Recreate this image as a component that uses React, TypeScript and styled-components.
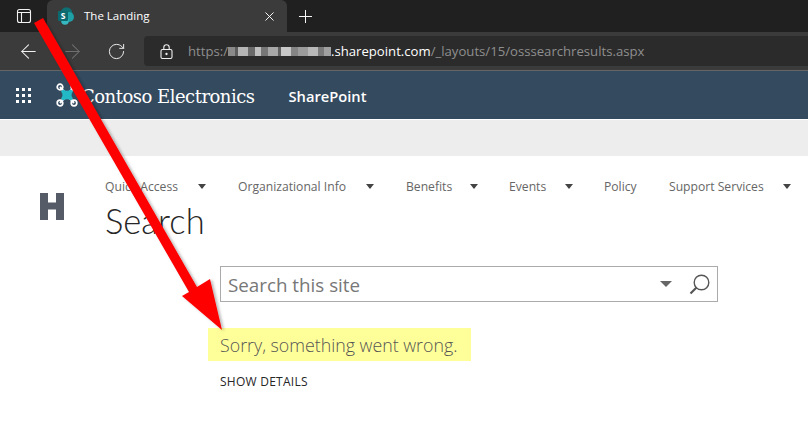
import React from "react";
import styled, { createGlobalStyle } from "styled-components";
import { ArrowLeft, ArrowRight, RotateCw, Plus, X } from "lucide-react";

const GlobalStyle = createGlobalStyle`
  html, body {
    margin: 0;
    padding: 0;
    background: #ffffff;
    overflow: hidden;
  }
`;

const Page = styled.div`
  position: relative;
  width: 808px;
  height: 431px;
  overflow: hidden;
  font-family: "Open Sans", "Noto Sans", sans-serif;
`;

const TabStrip = styled.div`
  display: flex;
  align-items: flex-end;
  height: 32px;
  background: #202020;
`;

const WindowButton = styled.div`
  display: flex;
  justify-content: center;
  align-items: center;
  width: 47px;
  height: 32px;
`;

const Tab = styled.div`
  display: flex;
  align-items: center;
  width: 240px;
  height: 32px;
  padding: 0 10px;
  box-sizing: border-box;
  background: #3b3b3b;
  border-radius: 6px 6px 0 0;
  color: #ffffff;
  font-size: 11.5px;
`;

const TabTitle = styled.span`
  flex: 1;
  margin: 0 0 2px 9px;
`;

const NewTab = styled.div`
  display: flex;
  justify-content: center;
  align-items: center;
  width: 36px;
  height: 32px;
  color: #ffffff;
`;

const Toolbar = styled.div`
  display: flex;
  align-items: center;
  height: 38px;
  padding-left: 6px;
  background: #3b3b3b;
  border-bottom: 1px solid #666666;
`;

const NavButton = styled.div<{ $dim?: boolean }>`
  display: flex;
  justify-content: center;
  align-items: center;
  width: 44px;
  height: 30px;
  color: ${({ $dim }) => ($dim ? "#6f6f6f" : "#f2f2f2")};
`;

const AddressBar = styled.div`
  display: flex;
  align-items: center;
  flex: 1;
  height: 30px;
  margin-left: 6px;
  padding-left: 16px;
  background: #2b2b2b;
  border-radius: 4px 0 0 4px;
  font-size: 13.15px;
`;

const UrlText = styled.span<{ $bright?: boolean }>`
  color: ${({ $bright }) => ($bright ? "#ffffff" : "#8f8f8f")};
`;

const LockSlot = styled.span`
  display: flex;
  width: 28px;
`;

const Redacted = styled.span`
  display: flex;
  width: 103px;
  height: 9px;
  margin-top: 1px;
`;

const RedactedBlock = styled.span<{ $shade: string; $grow: number }>`
  flex: ${({ $grow }) => $grow};
  background: ${({ $shade }) => $shade};
`;

const SuiteBar = styled.div`
  display: flex;
  align-items: center;
  height: 48px;
  background: #344a5e;
  color: #ffffff;
`;

const Waffle = styled.div`
  display: grid;
  grid-template-columns: repeat(3, 3px);
  gap: 3px;
  margin-left: 16px;
`;

const WaffleDot = styled.span`
  width: 3px;
  height: 3px;
  background: #ffffff;
`;

const Brand = styled.div`
  display: flex;
  align-items: center;
  margin-left: 25px;
`;

const BrandName = styled.span`
  margin: 2px 0 0 3px;
  font-family: "DejaVu Serif", serif;
  font-size: 18px;
  letter-spacing: -0.5px;
`;

const SuiteLabel = styled.span`
  margin: 2px 0 0 34px;
  font-size: 14.7px;
  font-weight: 600;
`;

const RibbonBand = styled.div`
  height: 36px;
  margin-top: 1px;
  background: #ededed;
`;

const Content = styled.div`
  display: flex;
`;

const LogoColumn = styled.div`
  width: 105px;
  padding: 37px 0 0 40px;
  box-sizing: border-box;
`;

const Main = styled.div`
  flex: 1;
`;

const TopNav = styled.nav`
  display: flex;
  align-items: center;
  height: 18px;
  margin-top: 21px;
`;

const NavItem = styled.div<{ $width: number }>`
  display: flex;
  align-items: center;
  width: ${({ $width }) => $width}px;
  font-size: 12.15px;
  color: #666666;
`;

const Caret = styled.span<{ $gap: number }>`
  margin-left: ${({ $gap }) => $gap}px;
  width: 0;
  height: 0;
  border-left: 4px solid transparent;
  border-right: 4px solid transparent;
  border-top: 5px solid #444444;
`;

const PageTitle = styled.h1`
  margin: 4px 0 0;
  font-family: "Lato", "Open Sans", sans-serif;
  font-size: 34.6px;
  line-height: 44px;
  font-weight: 300;
  color: #262626;
`;

const ResultsColumn = styled.div`
  margin: 23px 0 0 115px;
  width: 498px;
`;

const SearchBox = styled.div`
  display: flex;
  align-items: center;
  height: 36px;
  box-sizing: border-box;
  padding: 0 7px 0 7px;
  border: 1px solid #ababab;
`;

const SearchText = styled.span`
  flex: 1;
  margin-top: 2px;
  font-size: 18.8px;
  color: #777777;
`;

const SearchCaret = styled.span`
  width: 0;
  height: 0;
  margin-right: 17px;
  border-left: 6px solid transparent;
  border-right: 6px solid transparent;
  border-top: 6px solid #666666;
`;

const Message = styled.div`
  display: inline-block;
  margin: 26px 0 0 -12px;
  padding: 1px 14px 0 12px;
  background: #ffff99;
  font-size: 17.8px;
  line-height: 32px;
  font-weight: 300;
  color: #555555;
`;

const ShowDetails = styled.div`
  margin-top: 12px;
  font-size: 12px;
  letter-spacing: 0.25px;
  color: #262626;
`;

const ArrowOverlay = styled.svg`
  position: absolute;
  top: 0;
  left: 0;
  pointer-events: none;
`;

const navItems = [
  { label: "Quick Access", width: 133, caret: 20 },
  { label: "Organizational Info", width: 168, caret: 20 },
  { label: "Benefits", width: 103, caret: 18 },
  { label: "Events", width: 95, caret: 19 },
  { label: "Policy", width: 65 },
  { label: "Support Services", width: 130, caret: 19 },
];

const redactedBlocks = [
  ["#8a8a8a", 2], ["#5d5d5d", 1], ["#b5b5b5", 3], ["#6a6a6a", 2], ["#c0c0c0", 2], ["#777777", 2],
  ["#a8a8a8", 3], ["#606060", 1], ["#c8c8c8", 3], ["#858585", 2], ["#9c9c9c", 3], ["#b8b8b8", 3],
  ["#7a7a7a", 2], ["#a0a0a0", 2],
] as [string, number][];

const SharePointIcon = () => (
  <svg width="18" height="18" viewBox="0 0 18 18">
    <circle cx="9.5" cy="6" r="5.8" fill="#0e6f75" />
    <circle cx="12" cy="10" r="5" fill="#1f9fa6" />
    <circle cx="8" cy="14" r="3.8" fill="#37b8c0" />
    <rect x="1" y="4" width="10" height="10" rx="1" fill="#0b6a70" />
    <text x="6" y="12.2" fontSize="8.5" fontWeight="700" textAnchor="middle" fill="#ffffff" fontFamily="Open Sans, sans-serif">S</text>
  </svg>
);

const DroneLogo = () => (
  <svg width="22" height="24" viewBox="0 0 22 24" fill="none">
    <path d="M4 4 L18 20 M18 4 L4 20" stroke="#ffffff" strokeWidth="2" />
    <circle cx="4" cy="4" r="2.8" stroke="#ffffff" strokeWidth="1.7" />
    <circle cx="18" cy="4" r="2.8" stroke="#ffffff" strokeWidth="1.7" />
    <circle cx="4" cy="20" r="2.8" stroke="#ffffff" strokeWidth="1.7" />
    <circle cx="18" cy="20" r="2.8" stroke="#ffffff" strokeWidth="1.7" />
    <path d="M7 6.5 Q11 9 15 6.5 L17 8.5 Q14 12 17 15.5 L15 17.5 Q11 15 7 17.5 L5 15.5 Q8 12 5 8.5 Z" fill="#22b8c6" />
  </svg>
);

const App: React.FC = () => {
  return (
    <Page>
      <GlobalStyle />
      <TabStrip>
        <WindowButton>
          <svg width="16" height="16" viewBox="0 0 16 16" fill="none" stroke="#f2f2f2" strokeWidth="1.1">
            <rect x="1.5" y="1.5" width="13" height="13" rx="2" />
            <path d="M1.5 4.5h13M5.5 4.5v10" />
          </svg>
        </WindowButton>
        <Tab>
          <SharePointIcon />
          <TabTitle>The Landing</TabTitle>
          <X size={15} strokeWidth={1.5} />
        </Tab>
        <NewTab>
          <Plus size={21} strokeWidth={1.1} />
        </NewTab>
      </TabStrip>
      <Toolbar>
        <NavButton><ArrowLeft size={23} strokeWidth={1.1} /></NavButton>
        <NavButton $dim><ArrowRight size={23} strokeWidth={1.1} /></NavButton>
        <NavButton><RotateCw size={19} strokeWidth={1.2} /></NavButton>
        <AddressBar>
          <LockSlot>
            <svg width="13" height="15" viewBox="0 0 13 15" fill="none" stroke="#f0f0f0" strokeWidth="1.1">
              <rect x="1" y="5.5" width="11" height="9" rx="1.5" />
              <path d="M3.8 5.5V3.5a2.7 2.7 0 0 1 5.4 0v2" />
              <circle cx="6.5" cy="10" r="0.6" fill="#f0f0f0" />
            </svg>
          </LockSlot>
          <UrlText>https:/</UrlText>
          <Redacted>
            {redactedBlocks.map(([shade, grow], index) => (
              <RedactedBlock key={index} $shade={shade} $grow={grow} />
            ))}
          </Redacted>
          <UrlText $bright>.sharepoint.com</UrlText>
          <UrlText>/_layouts/15/osssearchresults.aspx</UrlText>
        </AddressBar>
      </Toolbar>
      <SuiteBar>
        <Waffle>
          {Array.from({ length: 9 }, (_, index) => <WaffleDot key={index} />)}
        </Waffle>
        <Brand>
          <DroneLogo />
          <BrandName>Contoso Electronics</BrandName>
        </Brand>
        <SuiteLabel>SharePoint</SuiteLabel>
      </SuiteBar>
      <RibbonBand />
      <Content>
        <LogoColumn>
          <svg width="24" height="27" viewBox="0 0 24 27">
            <path d="M0 0h8v9.5h8V0h8v27h-8V16.5H8V27H0z" fill="#555b67" />
          </svg>
        </LogoColumn>
        <Main>
          <TopNav>
            {navItems.map(item => (
              <NavItem key={item.label} $width={item.width}>
                {item.label}
                {item.caret !== undefined && <Caret $gap={item.caret} />}
              </NavItem>
            ))}
          </TopNav>
          <PageTitle>Search</PageTitle>
          <ResultsColumn>
            <SearchBox>
              <SearchText>Search this site</SearchText>
              <SearchCaret />
              <svg width="21" height="21" viewBox="0 0 21 21" fill="none" stroke="#555555">
                <circle cx="12.5" cy="8.5" r="7.3" strokeWidth="1.4" />
                <path d="M7.5 13.5 L1.5 19.5" strokeWidth="2.2" />
              </svg>
            </SearchBox>
            <Message>Sorry, something went wrong.</Message>
            <ShowDetails>SHOW DETAILS</ShowDetails>
          </ResultsColumn>
        </Main>
      </Content>
      <ArrowOverlay width="808" height="431" viewBox="0 0 808 431">
        <defs>
          <filter id="arrowShadow" x="-10%" y="-10%" width="120%" height="120%">
            <feDropShadow dx="2" dy="1" stdDeviation="1.5" floodColor="#000000" floodOpacity="0.3" />
          </filter>
        </defs>
        <path
          d="M34 23 L43 18 L197 287 L210 279 L222 330 L182 296 L189 292 Z"
          fill="#ff0000"
          filter="url(#arrowShadow)"
        />
      </ArrowOverlay>
    </Page>
  );
};

export default App;
